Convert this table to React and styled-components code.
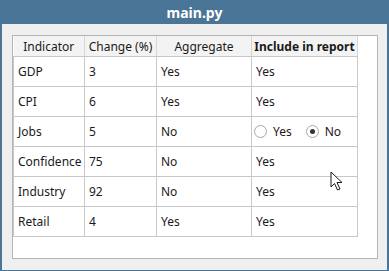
import styled, { createGlobalStyle } from 'styled-components';

const GlobalStyle = createGlobalStyle`
  html, body {
    margin: 0;
    padding: 0;
    background: #efefef;
  }
  body {
    font-family: 'Noto Sans', 'Open Sans', sans-serif;
    font-size: 12px;
    color: #1a1a1a;
  }
`;

const rows = [
  { name: 'GDP', change: '3', aggregate: 'Yes', include: 'Yes' },
  { name: 'CPI', change: '6', aggregate: 'Yes', include: 'Yes' },
  { name: 'Jobs', change: '5', aggregate: 'No', include: 'radio' },
  { name: 'Confidence', change: '75', aggregate: 'No', include: 'Yes' },
  { name: 'Industry', change: '92', aggregate: 'No', include: 'Yes' },
  { name: 'Retail', change: '4', aggregate: 'Yes', include: 'Yes' },
];

const columns = [
  { label: 'Indicator', width: 71 },
  { label: 'Change (%)', width: 72 },
  { label: 'Aggregate', width: 95 },
  { label: 'Include in report', width: 106, bold: true },
];

export default function App() {
  return (
    <>
      <GlobalStyle />
      <Window>
        <TitleBar>main.py</TitleBar>
        <Content>
          <Frame>
            <Grid>
              <colgroup>
                {columns.map((c) => (
                  <col key={c.label} style={{ width: c.width }} />
                ))}
              </colgroup>
              <thead>
                <tr>
                  {columns.map((c) => (
                    <HeaderCell key={c.label} $bold={c.bold}>
                      {c.label}
                    </HeaderCell>
                  ))}
                </tr>
              </thead>
              <tbody>
                {rows.map((r) => (
                  <tr key={r.name}>
                    <Cell $first>{r.name}</Cell>
                    <Cell>{r.change}</Cell>
                    <Cell>{r.aggregate}</Cell>
                    <Cell>
                      {r.include === 'radio' ? (
                        <RadioGroup>
                          <RadioOption>
                            <Radio />
                            Yes
                          </RadioOption>
                          <RadioOption>
                            <Radio $checked />
                            No
                          </RadioOption>
                        </RadioGroup>
                      ) : (
                        r.include
                      )}
                    </Cell>
                  </tr>
                ))}
              </tbody>
            </Grid>
            <Pointer width="14" height="21" viewBox="0 0 14 21">
              <path
                d="M1 1 L1 16 L4.5 12.5 L7.5 19 L10 18 L7 11.5 L12 11.5 Z"
                fill="#ffffff"
                stroke="#1a1a1a"
                strokeWidth="1"
                strokeLinejoin="round"
              />
            </Pointer>
          </Frame>
        </Content>
      </Window>
    </>
  );
}

const Window = styled.div`
  width: 389px;
  height: 271px;
  box-sizing: border-box;
  display: flex;
  flex-direction: column;
  background: #efefef;
  border: 2px solid #4a7596;
  border-top: none;
  border-bottom-width: 1px;
`;

const TitleBar = styled.div`
  height: 24px;
  margin: 0 -2px;
  background: #4a7596;
  color: #ffffff;
  font-weight: 700;
  font-size: 14px;
  display: flex;
  align-items: center;
  justify-content: center;
`;

const Content = styled.div`
  flex: 1;
  padding: 11px 9px 11px 10px;
  display: flex;
`;

const Frame = styled.div`
  position: relative;
  flex: 1;
  background: #ffffff;
  border: 1px solid #b4b4b4;
  overflow: hidden;
`;

const Grid = styled.table`
  border-collapse: collapse;
  table-layout: fixed;
  width: 344px;
`;

const HeaderCell = styled.th`
  height: 20px;
  padding: 0;
  background: #f3f3f3;
  border-right: 1px solid #d6d6d6;
  border-bottom: 1px solid #c8c8c8;
  font-weight: ${(p) => (p.$bold ? 700 : 400)};
  text-align: center;
  white-space: nowrap;
  overflow: hidden;
  color: #1a1a1a;
`;

const Cell = styled.td`
  height: 29px;
  padding: 0 0 0 4px;
  border-right: 1px solid #c8c8c8;
  border-bottom: 1px solid #c8c8c8;
  border-left: ${(p) => (p.$first ? '1px solid #c8c8c8' : 'none')};
  white-space: nowrap;
  overflow: hidden;
`;

const RadioGroup = styled.div`
  display: flex;
  align-items: center;
  gap: 14px;
  margin-left: -2px;
`;

const RadioOption = styled.label`
  display: flex;
  align-items: center;
  gap: 6px;
`;

const Radio = styled.span`
  width: 11px;
  height: 11px;
  border-radius: 50%;
  border: 1px solid #a8a8a8;
  background: #ffffff;
  display: flex;
  align-items: center;
  justify-content: center;
  &::after {
    content: '';
    width: 5px;
    height: 5px;
    border-radius: 50%;
    background: ${(p) => (p.$checked ? '#333333' : 'transparent')};
  }
`;

const Pointer = styled.svg`
  position: absolute;
  left: 317px;
  top: 135px;
`;
